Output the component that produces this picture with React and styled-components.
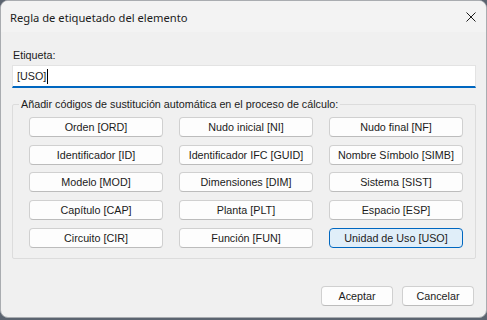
import React from "react";
import styled, { createGlobalStyle } from "styled-components";

const GlobalStyle = createGlobalStyle`
  html, body {
    margin: 0;
    padding: 0;
    background: #5b6470;
  }
  body {
    width: 487px;
    height: 320px;
    overflow: hidden;
    font-family: "Liberation Sans", Arial, sans-serif;
    font-size: 10.75px;
    color: #1b1b1b;
  }
`;

const codes = [
  "Orden [ORD]",
  "Nudo inicial [NI]",
  "Nudo final [NF]",
  "Identificador [ID]",
  "Identificador IFC [GUID]",
  "Nombre Símbolo [SIMB]",
  "Modelo [MOD]",
  "Dimensiones [DIM]",
  "Sistema [SIST]",
  "Capítulo [CAP]",
  "Planta [PLT]",
  "Espacio [ESP]",
  "Circuito [CIR]",
  "Función [FUN]",
  "Unidad de Uso [USO]",
];

const App = () => {
  const selected = "Unidad de Uso [USO]";

  return (
    <>
      <GlobalStyle />
      <Window>
        <TitleBar>
          <Title>Regla de etiquetado del elemento</Title>
          <CloseButton aria-label="Cerrar">
            <svg width="10" height="10" viewBox="0 0 10 10">
              <path d="M0.5 0.5 L9.5 9.5 M9.5 0.5 L0.5 9.5" stroke="#1b1b1b" strokeWidth="1" fill="none" />
            </svg>
          </CloseButton>
        </TitleBar>
        <Body>
          <Label>Etiqueta:</Label>
          <TextBox>
            [USO]
            <Caret />
          </TextBox>
          <Group>
            <Legend>Añadir códigos de sustitución automática en el proceso de cálculo:</Legend>
            <CodeGrid>
              {codes.map((c) => (
                <CodeButton key={c} $active={c === selected}>
                  {c}
                </CodeButton>
              ))}
            </CodeGrid>
          </Group>
          <Footer>
            <DialogButton>Aceptar</DialogButton>
            <DialogButton>Cancelar</DialogButton>
          </Footer>
        </Body>
      </Window>
    </>
  );
};

export default App;

const Window = styled.div`
  width: 485px;
  height: 316px;
  background: #f0f0f0;
  border: 1px solid #a9acb0;
  border-radius: 8px;
  overflow: hidden;
  display: flex;
  flex-direction: column;
`;

const TitleBar = styled.div`
  height: 31px;
  flex-shrink: 0;
  background: #f3f3f3;
  display: flex;
  align-items: center;
  justify-content: space-between;
  padding-left: 9px;
`;

const Title = styled.span`
  font-family: "Noto Sans", "Open Sans", sans-serif;
  font-size: 11.2px;
  color: #1b1b1b;
  margin-top: 1px;
`;

const CloseButton = styled.div`
  width: 30px;
  height: 31px;
  display: flex;
  align-items: center;
  justify-content: center;
`;

const Body = styled.div`
  flex: 1;
  display: flex;
  flex-direction: column;
  padding: 15px 10px 0 11px;
`;

const Label = styled.div`
  height: 17px;
  line-height: 17px;
  margin-left: 1px;
`;

const TextBox = styled.div`
  height: 20px;
  background: #ffffff;
  border: 1px solid #e3e3e3;
  border-bottom: 2px solid #0067c0;
  display: flex;
  align-items: center;
  padding-left: 4px;
  margin-top: 1px;
`;

const Caret = styled.span`
  display: inline-block;
  width: 1px;
  height: 15px;
  background: #000;
  margin-left: 1px;
`;

const Group = styled.fieldset`
  margin: 10px 0 0 0;
  padding: 7px 12px 10px 16px;
  border: 1px solid #dcdcdc;
  border-radius: 2px;
  min-width: 0;
`;

const Legend = styled.legend`
  padding: 0 2px;
  margin-left: -10px;
  color: #1b1b1b;
`;

const CodeGrid = styled.div`
  display: grid;
  grid-template-columns: repeat(3, 134px);
  column-gap: 16px;
  row-gap: 7.7px;
`;

const CodeButton = styled.div`
  height: 18px;
  display: flex;
  align-items: center;
  justify-content: center;
  background: ${(p) => (p.$active ? "#e0eef9" : "#fdfdfd")};
  border: 1px solid ${(p) => (p.$active ? "#0067c0" : "#d0d0d0")};
  border-bottom-color: ${(p) => (p.$active ? "#0067c0" : "#bcbcbc")};
  border-radius: 4px;
  white-space: nowrap;
`;

const Footer = styled.div`
  margin-top: auto;
  margin-bottom: 11px;
  display: flex;
  justify-content: flex-end;
  gap: 9px;
  padding-right: 2px;
`;

const DialogButton = styled.div`
  width: 70px;
  height: 18px;
  display: flex;
  align-items: center;
  justify-content: center;
  background: #fdfdfd;
  border: 1px solid #d0d0d0;
  border-bottom-color: #bcbcbc;
  border-radius: 4px;
`;
